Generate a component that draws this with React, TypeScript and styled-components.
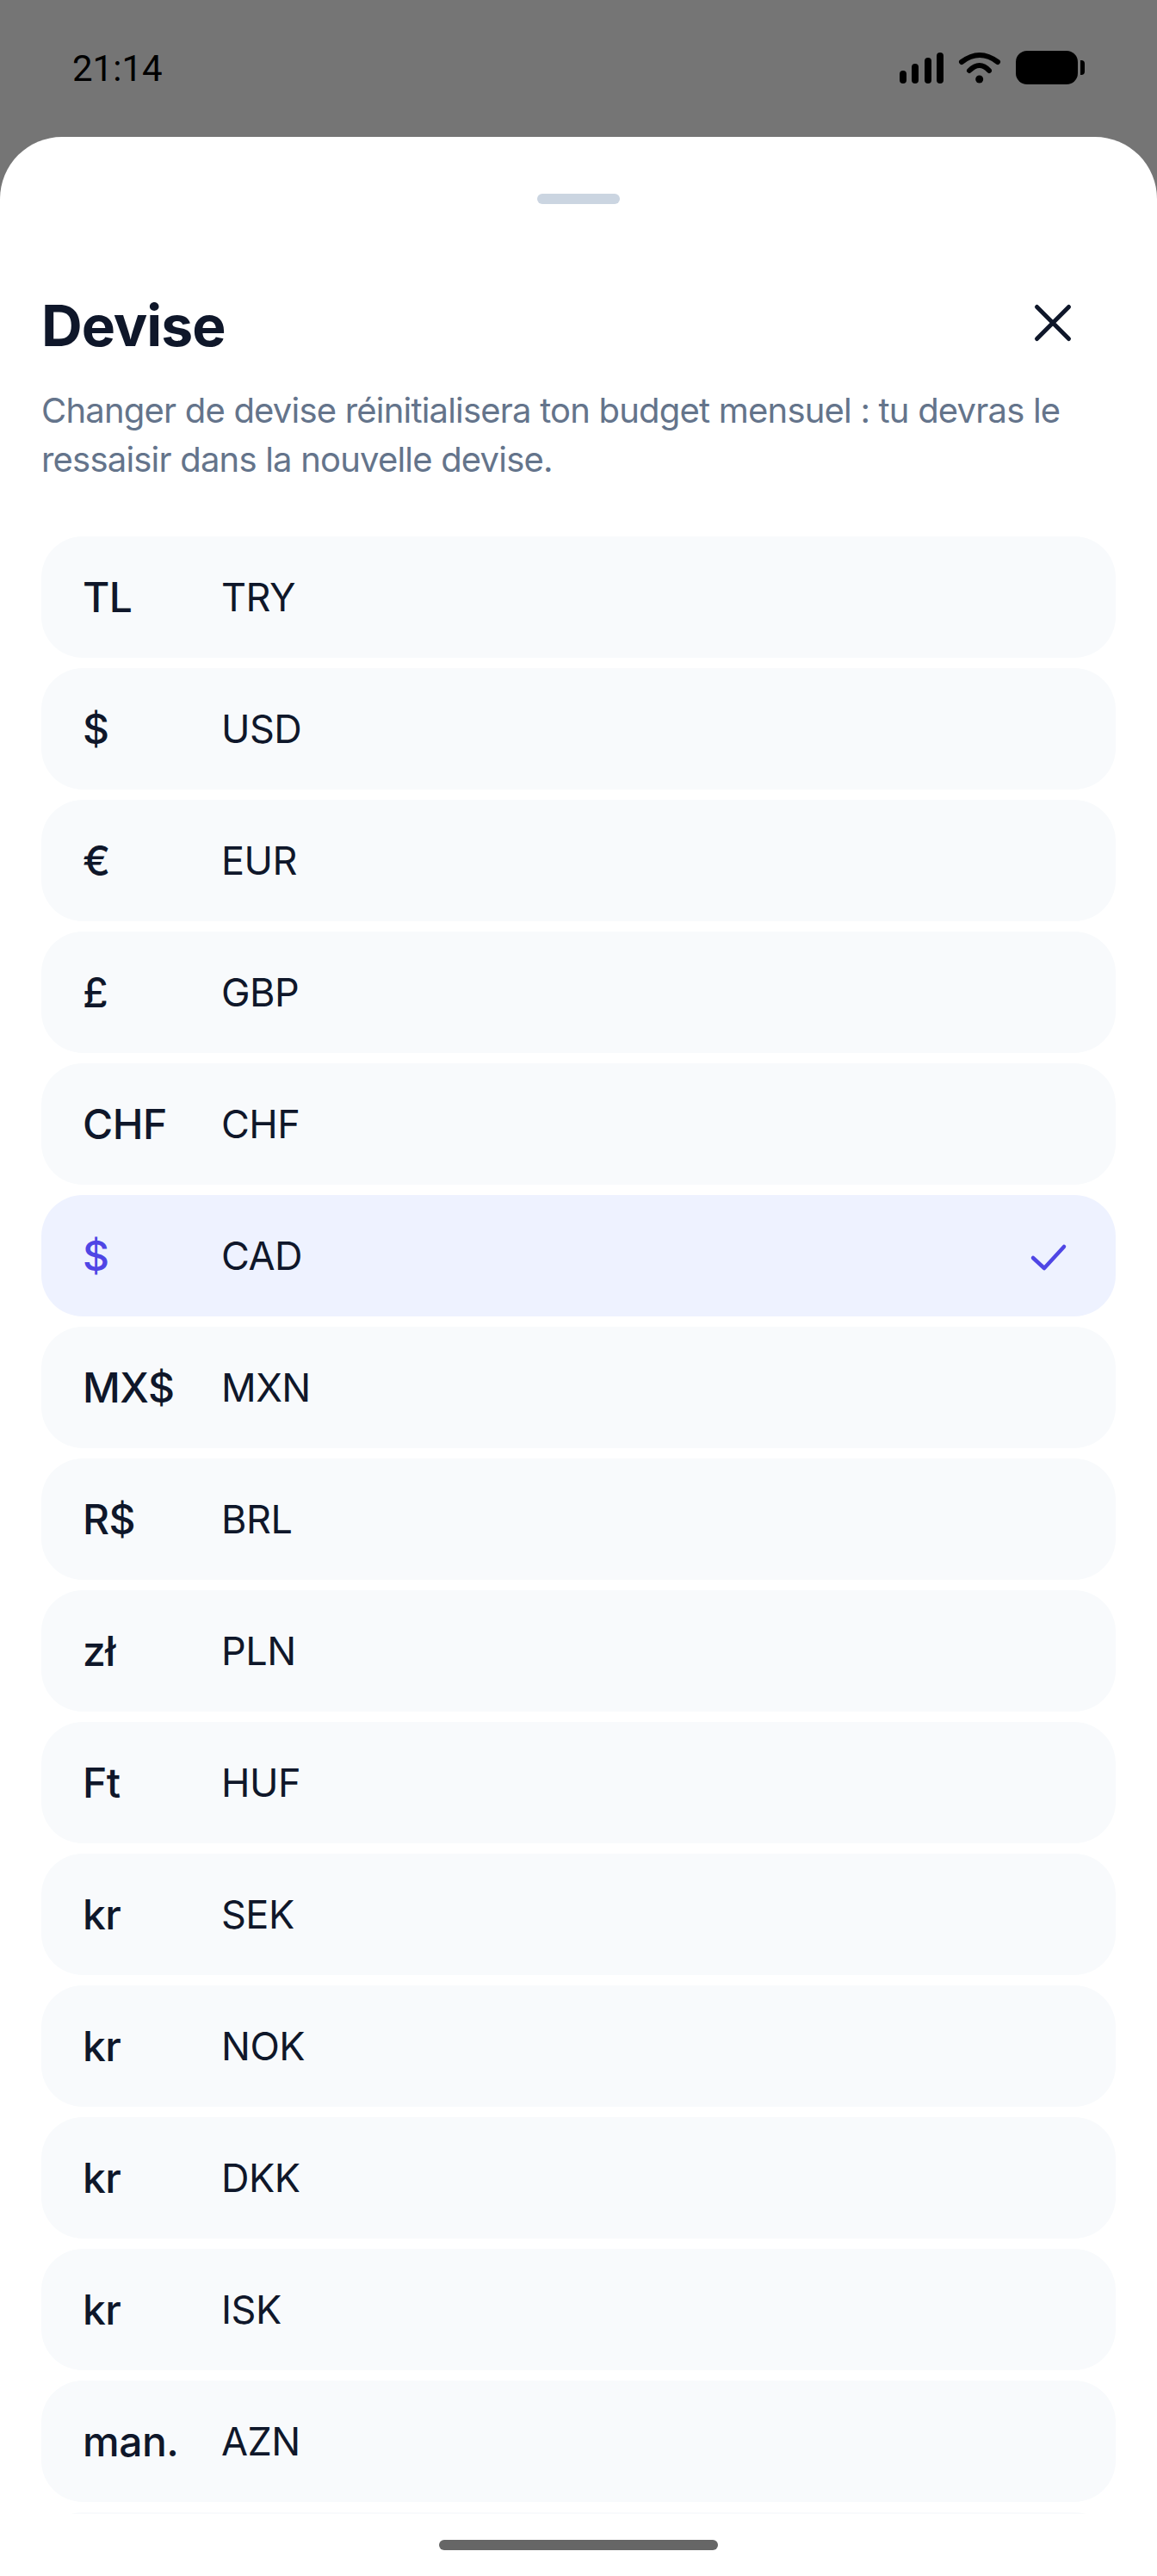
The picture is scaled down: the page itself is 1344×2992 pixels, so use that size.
import React from "react";
import styled, { createGlobalStyle } from "styled-components";

const Global = createGlobalStyle`
  html, body { margin: 0; padding: 0; }
  body { font-family: "Inter", "Liberation Sans", sans-serif; }
`;

const Screen = styled.div`
  width: 1344px;
  height: 2992px;
  background: #757575;
  display: flex;
  flex-direction: column;
  overflow: hidden;
`;

const StatusBar = styled.header`
  height: 159px;
  flex: none;
  box-sizing: border-box;
  padding: 0 84px 1px 84px;
  display: flex;
  align-items: center;
  justify-content: space-between;
`;

const Clock = styled.span`
  font-family: "Roboto", sans-serif;
  font-size: 42px;
  font-weight: 400;
  color: #000;
`;

const StatusIcons = styled.div`
  display: flex;
  align-items: center;
`;

const Sheet = styled.main`
  flex: 1;
  min-height: 0;
  background: #fff;
  border-radius: 72px 72px 0 0;
  display: flex;
  flex-direction: column;
`;

const Handle = styled.div`
  width: 96px;
  height: 12px;
  border-radius: 6px;
  background: #cbd5e1;
  margin: 66px auto 0;
  flex: none;
`;

const Head = styled.div`
  flex: none;
  display: flex;
  align-items: center;
  justify-content: space-between;
  padding: 0 48px;
  margin-top: 101px;
`;

const Title = styled.h1`
  margin: 0;
  font-size: 66px;
  line-height: 80px;
  font-weight: 700;
  letter-spacing: -1px;
  color: #0f172a;
`;

const CloseButton = styled.button`
  border: 0;
  background: none;
  padding: 0;
  width: 48px;
  height: 48px;
  margin: 0 49px 6px 0;
  display: flex;
`;

const Description = styled.p`
  flex: none;
  margin: 30px 48px 0;
  font-size: 40px;
  line-height: 57px;
  letter-spacing: -0.8px;
  color: #64748b;
  font-weight: 400;
`;

const List = styled.ul`
  flex: 1;
  min-height: 0;
  overflow: hidden;
  list-style: none;
  margin: 61px 0 0;
  padding: 0 48px;
  display: flex;
  flex-direction: column;
  gap: 12px;
`;

const Row = styled.li<{ $selected?: boolean }>`
  flex: none;
  height: 141px;
  box-sizing: border-box;
  border-radius: 48px;
  background: ${(p) => (p.$selected ? "#eef2ff" : "#f8fafc")};
  padding: 0 48px;
  display: flex;
  align-items: center;
`;

const Symbol = styled.span<{ $selected?: boolean }>`
  width: 161px;
  flex: none;
  font-size: 48px;
  font-weight: 500;
  letter-spacing: -0.5px;
  color: ${(p) => (p.$selected ? "#4f46e5" : "#0f172a")};
`;

const Code = styled.span`
  flex: 1;
  font-size: 45px;
  font-weight: 400;
  letter-spacing: -0.5px;
  color: #0f172a;
`;

const CheckMark = styled.svg`
  flex: none;
  margin-right: 8px;
`;

const HomeArea = styled.footer`
  flex: none;
  height: 72px;
  display: flex;
  justify-content: center;
  padding-top: 30px;
  box-sizing: border-box;
`;

const HomeBar = styled.div`
  width: 324px;
  height: 12px;
  border-radius: 6px;
  background: #666;
`;

const currencies: [string, string][] = [
  ["TL", "TRY"], ["$", "USD"], ["€", "EUR"], ["£", "GBP"], ["CHF", "CHF"],
  ["$", "CAD"], ["MX$", "MXN"], ["R$", "BRL"], ["zł", "PLN"], ["Ft", "HUF"],
  ["kr", "SEK"], ["kr", "NOK"], ["kr", "DKK"], ["kr", "ISK"], ["man.", "AZN"],
];

export default function App() {
  return (
    <Screen>
      <Global />
      <StatusBar>
        <Clock>21:14</Clock>
        <StatusIcons>
          <svg width="215" height="40" viewBox="0 0 215 40" fill="#000">
            <rect x="0" y="23" width="8" height="15" rx="4" />
            <rect x="14" y="15" width="8" height="23" rx="4" />
            <rect x="29" y="8" width="8" height="30" rx="4" />
            <rect x="43" y="2" width="8" height="36" rx="4" />
            <path d="M72 13 Q93 -3 114 13" fill="none" stroke="#000" strokeWidth="6" strokeLinecap="round" />
            <path d="M81 23 Q93 11 104 23" fill="none" stroke="#000" strokeWidth="6" strokeLinecap="round" />
            <circle cx="92.7" cy="33" r="4.5" />
            <rect x="135" y="0" width="72" height="39" rx="13" />
            <path d="M210 11 h1 a4 4 0 0 1 4 4 v9 a4 4 0 0 1 -4 4 h-1 z" />
          </svg>
        </StatusIcons>
      </StatusBar>
      <Sheet>
        <Handle />
        <Head>
          <Title>Devise</Title>
          <CloseButton aria-label="Fermer">
            <svg width="48" height="48" viewBox="0 0 48 48" fill="none" stroke="#0f172a" strokeWidth="5" strokeLinecap="round">
              <path d="M5.5 5.5 42.5 42.5M42.5 5.5 5.5 42.5" />
            </svg>
          </CloseButton>
        </Head>
        <Description>
          Changer de devise réinitialisera ton budget mensuel : tu devras le ressaisir dans la nouvelle devise.
        </Description>
        <List>
          {currencies.map(([symbol, code]) => {
            const selected = code === "CAD";
            return (
              <Row key={code} $selected={selected}>
                <Symbol $selected={selected}>{symbol}</Symbol>
                <Code>{code}</Code>
                {selected && (
                  <CheckMark width="44" height="36" viewBox="0 0 44 36" fill="none" stroke="#4f46e5" strokeWidth="4.5" strokeLinecap="round" strokeLinejoin="round">
                    <path d="M4 20 17 32 40 7" />
                  </CheckMark>
                )}
              </Row>
            );
          })}
          <Row aria-hidden="true" />
        </List>
        <HomeArea>
          <HomeBar />
        </HomeArea>
      </Sheet>
    </Screen>
  );
}
